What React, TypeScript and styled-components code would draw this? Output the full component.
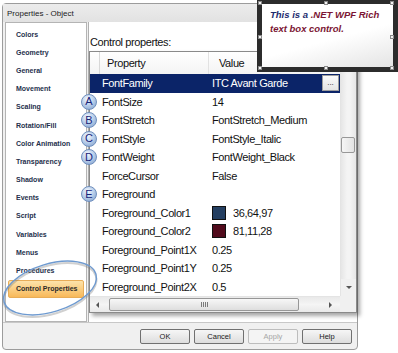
import React from "react"
import styled, { createGlobalStyle } from "styled-components"

const GlobalStyle = createGlobalStyle`
  html, body {
    margin: 0;
    padding: 0;
    background: #ffffff;
  }
  body {
    font-family: "Liberation Sans", Arial, sans-serif;
  }
`;

const Stage = styled.div`
  position: relative;
  width: 398px;
  height: 353px;
  overflow: hidden;
  background: #ffffff;
`;

// ダイアログ本体
const Dialog = styled.div`
  margin: 3px 0 0 2px;
  width: 356px;
  height: 347px;
  box-sizing: border-box;
  border: 1px solid #9c9c9c;
  border-radius: 4px;
  background: #f0f0f0;
  display: flex;
  flex-direction: column;
`;

const TitleBar = styled.div`
  height: 18px;
  display: flex;
  align-items: center;
  padding-left: 4px;
  font-size: 8px;
  color: #222;
  background: linear-gradient(#ececec, #e2e2e2);
`;

const Body = styled.div`
  height: 300px;
  display: flex;
  padding-left: 2px;
`;

// 左のナビ
const Nav = styled.div`
  width: 83px;
  box-sizing: border-box;
  background: #ffffff;
  border: 1px solid #b4b4b4;
  padding: 2px 2px 0 2px;
  display: flex;
  flex-direction: column;
`;

const NavItem = styled.div<{ $active?: boolean }>`
  height: 18.2px;
  flex: none;
  box-sizing: border-box;
  display: flex;
  align-items: center;
  padding-left: 8px;
  font-size: 7px;
  font-weight: bold;
  color: #25304c;
  border-radius: 2px;
  ${(p) =>
    p.$active &&
    `
    background: linear-gradient(#fde3ab, #f8b95a);
    border: 1px solid #e8ad58;
    padding-left: 7px;
    color: #2a2a2a;
  `}
`;

const Pane = styled.div`
  flex: 1;
  margin-left: 1px;
  background: #ffffff;
  border-left: 1px solid #b0b0b0;
  padding-top: 14px;
  display: flex;
  flex-direction: column;
`;

const PaneLabel = styled.div`
  height: 12px;
  line-height: 12px;
  padding-left: 1px;
  font-size: 11px;
  letter-spacing: -0.4px;
  color: #111;
  margin-bottom: 3px;
`;

// プロパティグリッド
const Grid = styled.div`
  width: 268px;
  height: 262px;
  box-sizing: border-box;
  border: 1px solid #8a8a8a;
  background: #ffffff;
  box-shadow: 3px 3px 4px rgba(0, 0, 0, 0.35);
  display: grid;
  grid-template-columns: 250px 16px;
  grid-template-rows: 244px 16px;
  font-size: 11px;
  letter-spacing: -0.4px;
  color: #111;
`;

const Rows = styled.div`
  display: flex;
  flex-direction: column;
`;

const Header = styled.div`
  height: 22px;
  display: flex;
  align-items: center;
  background: linear-gradient(#ffffff, #f4f4f4);
`;

const HeaderStub = styled.div`
  width: 9px;
  height: 100%;
  border-right: 1px solid #d8d8d8;
`;

const HeaderCell = styled.div<{ $w: number; $pad: number }>`
  width: ${(p) => p.$w}px;
  padding-left: ${(p) => p.$pad}px;
  box-sizing: border-box;
  height: 100%;
  display: flex;
  align-items: center;
  & + & {
    border-left: 1px solid #e2e2e2;
  }
`;

const Row = styled.div<{ $selected?: boolean }>`
  position: relative;
  height: 18.5px;
  display: flex;
  align-items: center;
  color: ${(p) => (p.$selected ? "#ffffff" : "#111")};
  background: ${(p) => (p.$selected ? "#0b2468" : "transparent")};
  margin-right: ${(p) => (p.$selected ? "0" : "0")};
`;

const NameCell = styled.div`
  width: 120px;
  padding-left: 12px;
  box-sizing: border-box;
  white-space: nowrap;
`;

const ValueCell = styled.div`
  flex: 1;
  padding-left: 2px;
  display: flex;
  align-items: center;
  gap: 7px;
  white-space: nowrap;
`;

const Swatch = styled.span<{ $color: string }>`
  width: 14px;
  height: 14px;
  background: ${(p) => p.$color};
  border: 1px solid #111;
  box-sizing: border-box;
`;

const Ellipsis = styled.div`
  width: 17px;
  height: 16px;
  box-sizing: border-box;
  margin-right: 1px;
  border: 1px solid #9d9d9d;
  background: linear-gradient(#fafafa, #e4e4e4);
  color: #222;
  font-size: 8px;
  letter-spacing: 0;
  display: flex;
  align-items: flex-end;
  justify-content: center;
  padding-bottom: 3px;
`;

// A〜Eのバッジ
const Badge = styled.span`
  position: absolute;
  left: -9px;
  top: 50%;
  transform: translateY(-50%);
  width: 16px;
  height: 16px;
  box-sizing: border-box;
  border-radius: 50%;
  border: 1px solid #6f8fbd;
  background: radial-gradient(circle at 40% 30%, #f4f8fd 0%, #bcd1ec 45%, #7c9ccb 100%);
  color: #172378;
  font-size: 11px;
  letter-spacing: 0;
  display: flex;
  align-items: center;
  justify-content: center;
  line-height: 1;
`;

const VScroll = styled.div`
  border-left: 1px solid #e4e4e4;
  background: #f0f0f0;
  display: flex;
  flex-direction: column;
`;

const ArrowBtn = styled.div`
  height: 17px;
  display: flex;
  align-items: center;
  justify-content: center;
  flex: none;
`;

const Track = styled.div`
  flex: 1;
  position: relative;
  background: linear-gradient(90deg, #e6e6e6, #f4f4f4 40%, #f4f4f4 60%, #e6e6e6);
`;

const VThumb = styled.div`
  margin: 68px 0 0 0;
  width: 14px;
  height: 16px;
  box-sizing: border-box;
  border: 1px solid #979797;
  border-radius: 2px;
  background: linear-gradient(90deg, #f6f6f6, #e2e2e2);
`;

const HScroll = styled.div`
  display: flex;
  align-items: center;
  background: linear-gradient(#e9e9e9, #f5f5f5 50%, #e9e9e9);
  border-top: 1px solid #e4e4e4;
`;

const HThumb = styled.div`
  margin-left: 3px;
  width: 190px;
  height: 13px;
  box-sizing: border-box;
  border: 1px solid #979797;
  border-radius: 2px;
  background: linear-gradient(#f7f7f7, #dedede);
  display: flex;
  align-items: center;
  justify-content: center;
  gap: 1px;
  & > i {
    width: 1px;
    height: 5px;
    background: #7a7a7a;
  }
`;

const Corner = styled.div`
  background: #f0f0f0;
`;

const Footer = styled.div`
  flex: 1;
  display: flex;
  align-items: center;
  justify-content: flex-end;
  gap: 4px;
  padding-right: 5px;
  border-top: 1px solid #c8c8c8;
`;

const Button = styled.div<{ $disabled?: boolean }>`
  width: 50px;
  height: 15px;
  box-sizing: border-box;
  border: 1px solid ${(p) => (p.$disabled ? "#bdbdbd" : "#707070")};
  border-radius: 2px;
  background: ${(p) => (p.$disabled ? "#f4f4f4" : "linear-gradient(#f6f6f6, #dddddd)")};
  color: ${(p) => (p.$disabled ? "#a6a6a6" : "#1a1a1a")};
  font-size: 7.5px;
  display: flex;
  align-items: center;
  justify-content: center;
`;

// 右上のリッチテキストボックス
const RichBox = styled.div`
  position: absolute;
  top: 0;
  right: 0;
  width: 141px;
  height: 72px;
  box-sizing: border-box;
  background: #2c2c2c;
  padding: 4px 5px 5px 5px;
`;

const RichInner = styled.div`
  height: 100%;
  box-sizing: border-box;
  background: linear-gradient(165deg, #ffffff 55%, #e4e4e4);
  padding: 4px 0 0 8px;
  font-size: 9.5px;
  font-weight: bold;
  font-style: italic;
  line-height: 13.5px;
  color: #7b1634;
`;

const Navy = styled.span`
  color: #1d2c6e;
`;

const Handle = styled.span<{ $x: number; $y: number }>`
  position: absolute;
  left: ${(p) => p.$x - 2}px;
  top: ${(p) => p.$y - 2}px;
  width: 4px;
  height: 4px;
  background: #f2f2f2;
  border: 1px solid #8a8a8a;
  box-sizing: border-box;
`;

const Ring = styled.svg`
  position: absolute;
  left: 0;
  top: 254px;
  pointer-events: none;
`;

const navItems = [
  "Colors",
  "Geometry",
  "General",
  "Movement",
  "Scaling",
  "Rotation/Fill",
  "Color Animation",
  "Transparency",
  "Shadow",
  "Events",
  "Script",
  "Variables",
  "Menus",
  "Procedures",
  "Control Properties",
];

type Prop = { name: string; value: string; badge?: string; swatch?: string };

const props: Prop[] = [
  { name: "FontSize", value: "14", badge: "A" },
  { name: "FontStretch", value: "FontStretch_Medium", badge: "B" },
  { name: "FontStyle", value: "FontStyle_Italic", badge: "C" },
  { name: "FontWeight", value: "FontWeight_Black", badge: "D" },
  { name: "ForceCursor", value: "False" },
  { name: "Foreground", value: "", badge: "E" },
  { name: "Foreground_Color1", value: "36,64,97", swatch: "#243f61" },
  { name: "Foreground_Color2", value: "81,11,28", swatch: "#510b1c" },
  { name: "Foreground_Point1X", value: "0.25" },
  { name: "Foreground_Point1Y", value: "0.25" },
  { name: "Foreground_Point2X", value: "0.5" },
];

const handles = [
  [3, 3], [69, 3], [135, 3],
  [3, 37], [135, 37],
  [3, 68], [69, 68], [135, 68],
];

const Tri = ({ dir }: { dir: "up" | "down" | "left" | "right" }) => {
  const pts = {
    up: "1,5 4,2 7,5",
    down: "1,2 4,5 7,2",
    left: "5,1 2,4 5,7",
    right: "2,1 5,4 2,7",
  }[dir];
  return (
    <svg width="8" height="8" viewBox="0 0 8 8">
      <polygon points={pts} fill="#555" />
    </svg>
  );
};

const App = () => (
  <Stage>
    <GlobalStyle />
    <Dialog>
      <TitleBar>Properties - Object</TitleBar>
      <Body>
        <Nav>
          {navItems.map((n) => (
            <NavItem key={n} $active={n === "Control Properties"}>
              {n}
            </NavItem>
          ))}
        </Nav>
        <Pane>
          <PaneLabel>Control propertes:</PaneLabel>
          <Grid>
            <Rows>
              <Header>
                <HeaderStub />
                <HeaderCell $w={108} $pad={7}>Property</HeaderCell>
                <HeaderCell $w={132} $pad={10}>Value</HeaderCell>
              </Header>
              <Row $selected>
                <NameCell>FontFamily</NameCell>
                <ValueCell>ITC Avant Garde</ValueCell>
                <Ellipsis>...</Ellipsis>
              </Row>
              {props.map((p) => (
                <Row key={p.name}>
                  {p.badge && <Badge>{p.badge}</Badge>}
                  <NameCell>{p.name}</NameCell>
                  <ValueCell>
                    {p.swatch && <Swatch $color={p.swatch} />}
                    {p.value}
                  </ValueCell>
                </Row>
              ))}
            </Rows>
            <VScroll>
              <ArrowBtn>
                <Tri dir="up" />
              </ArrowBtn>
              <Track>
                <VThumb />
              </Track>
              <ArrowBtn>
                <Tri dir="down" />
              </ArrowBtn>
            </VScroll>
            <HScroll>
              <ArrowBtn style={{ width: 16 }}>
                <Tri dir="left" />
              </ArrowBtn>
              <HThumb>
                <i />
                <i />
                <i />
                <i />
              </HThumb>
              <div style={{ flex: 1 }} />
              <ArrowBtn style={{ width: 18 }}>
                <Tri dir="right" />
              </ArrowBtn>
            </HScroll>
            <Corner />
          </Grid>
        </Pane>
      </Body>
      <Footer>
        <Button>OK</Button>
        <Button>Cancel</Button>
        <Button $disabled>Apply</Button>
        <Button>Help</Button>
      </Footer>
    </Dialog>

    <RichBox>
      <RichInner>
        <Navy>This is a</Navy> .NET WPF Rich
        <br />
        text box control.
      </RichInner>
      {handles.map(([x, y]) => (
        <Handle key={`${x}-${y}`} $x={x} $y={y} />
      ))}
    </RichBox>

    <Ring width="104" height="70" viewBox="0 0 104 70">
      <ellipse cx="50" cy="36" rx="48" ry="24" transform="rotate(-17 50 36)" fill="none" stroke="rgba(120,120,120,0.35)" strokeWidth="2" />
      <ellipse cx="50" cy="34" rx="48" ry="24" transform="rotate(-17 50 34)" fill="none" stroke="#6e9ad0" strokeWidth="1.4" />
    </Ring>
  </Stage>
);

export default App;
